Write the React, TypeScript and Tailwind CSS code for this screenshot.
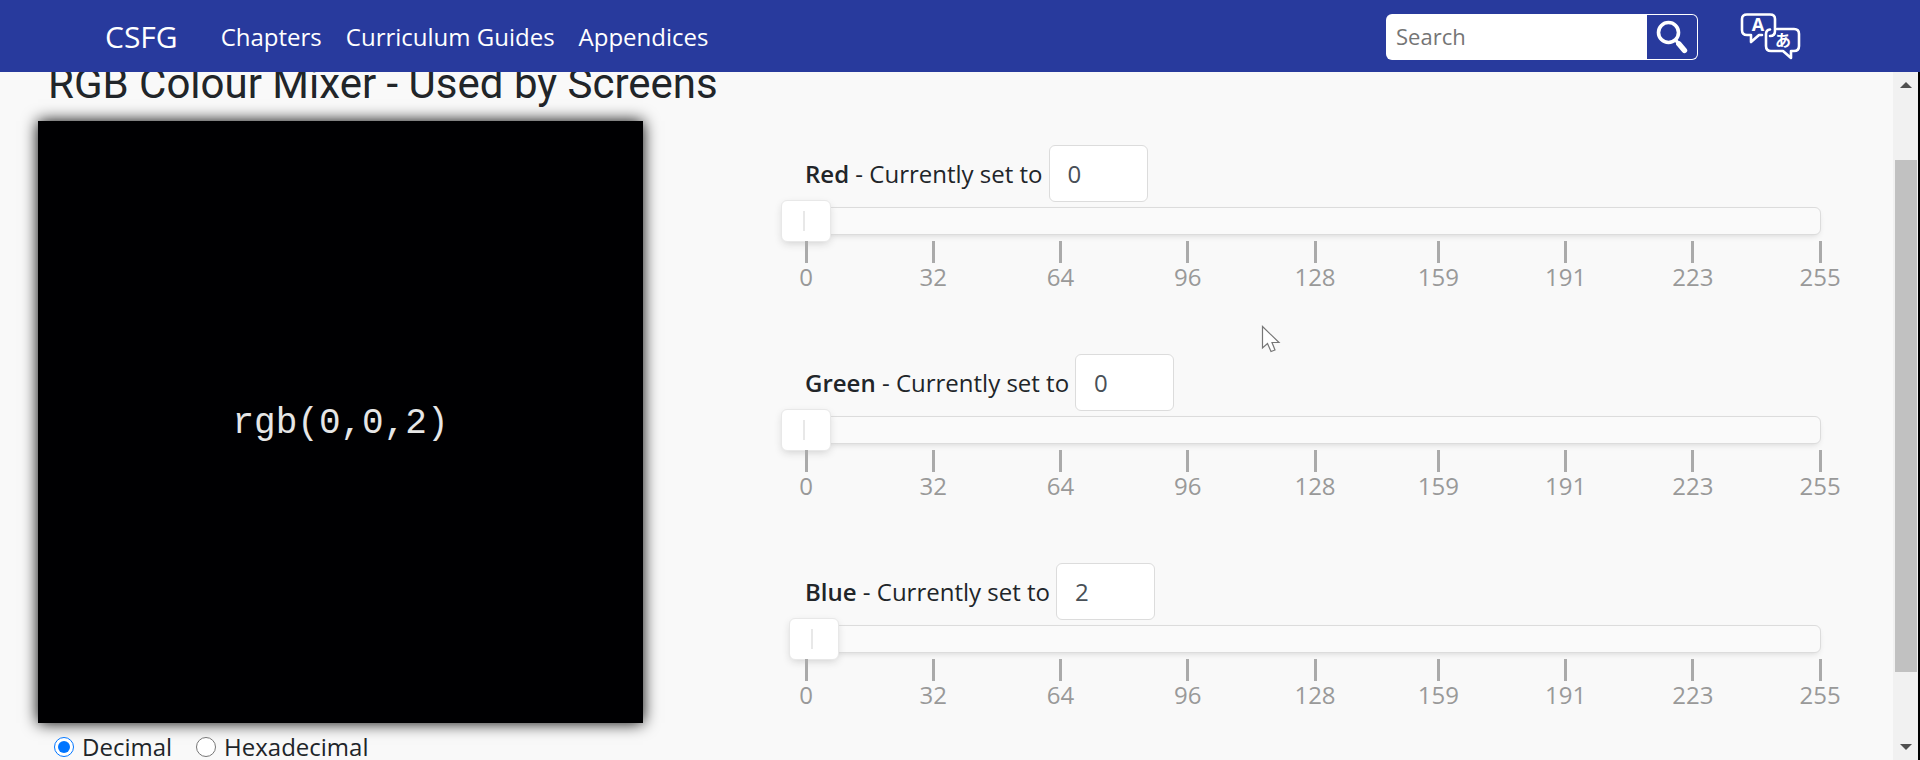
import { useState } from 'react';

type Channel = 'Red' | 'Green' | 'Blue';

const channels: Channel[] = ['Red', 'Green', 'Blue'];
const pips = [0, 32, 64, 96, 128, 159, 191, 223, 255];

function SearchIcon() {
  return (
    <svg width="32" height="34" viewBox="0 0 32 34" fill="none" stroke="currentColor" aria-hidden="true">
      <circle cx="12.5" cy="12.5" r="10" strokeWidth="3.6" />
      <path d="M19.8 20.2 L22.5 23.5" strokeWidth="3.4" />
      <path d="M22.8 23.8 L28.5 30.5" strokeWidth="5.4" strokeLinecap="round" />
    </svg>
  );
}

function LanguageIcon() {
  return (
    <svg width="62" height="48" viewBox="0 0 62 48" fill="none" stroke="currentColor" strokeWidth="2.6" strokeLinejoin="round" aria-hidden="true">
      <path d="M22 22 H19 L11 29 V22 H7 Q2 22 2 17 V6 Q2 1.5 7 1.5 H30 Q35 1.5 35 6 V18 Q35 23 30 23" strokeLinecap="round" />
      <path d="M37 16 H54 Q59 16 59 21 V33 Q59 38 54 38 H51 V45 L43 38 H31 Q26 38 26 33 V21 Q26 17 30 16.5" strokeLinecap="round" />
      <text x="18" y="18" textAnchor="middle" fill="currentColor" stroke="none" className="font-['Open_Sans',sans-serif] text-[18px] font-bold">A</text>
      <text x="43" y="33" textAnchor="middle" fill="currentColor" stroke="none" className="font-['Noto_Sans_CJK_JP',sans-serif] text-[16px] font-bold">あ</text>
    </svg>
  );
}

function Header() {
  return (
    <header className="relative z-10 flex h-18 shrink-0 items-center bg-[#283a9d] pt-0.5 pr-[118px] pl-[105px] text-white">
      <a href="#" className="mr-[43px] text-[30px]">CSFG</a>
      <nav className="flex gap-6">
        <a href="#chapters">Chapters</a>
        <a href="#guides">Curriculum Guides</a>
        <a href="#appendices">Appendices</a>
      </nav>
      <form className="ml-auto flex h-[46px]" onSubmit={(e) => e.preventDefault()}>
        <input
          type="search"
          aria-label="Search"
          placeholder="Search"
          className="w-[261px] rounded-l-md bg-white px-2.5 text-[22px] text-gray-700 outline-none placeholder:text-[#757575]"
        />
        <button type="submit" aria-label="Search" className="flex w-[51px] items-center justify-center rounded-r-md border border-l-0 border-white">
          <SearchIcon />
        </button>
      </form>
      <button type="button" aria-label="Language" className="ml-[42px]">
        <LanguageIcon />
      </button>
    </header>
  );
}

function ChannelSlider({ name, value, onChange }: { name: Channel; value: number; onChange: (value: number) => void }) {
  const set = (raw: string) => onChange(Math.max(0, Math.min(255, Number(raw) || 0)));

  return (
    <div className="h-[209px]">
      <div className="flex items-center">
        <label htmlFor={name} className="mr-1.5">
          <span className="font-semibold">{name}</span> - Currently set to
        </label>
        <input
          id={name}
          type="text"
          inputMode="numeric"
          value={value}
          onChange={(e) => set(e.target.value)}
          className="h-[57px] w-[99px] rounded-md border border-[#dcdcdc] bg-white px-[18px] text-[#495057] outline-none"
        />
      </div>
      <div className="mt-[5px] flex h-7 items-center rounded-md border border-[#dcdcdc] bg-[#fafafa] shadow-[0_3px_6px_-3px_#ccc]">
        <input
          type="range"
          min={0}
          max={255}
          value={value}
          onChange={(e) => set(e.target.value)}
          aria-label={`${name} value`}
          className="-mx-[25px] h-[42px] grow appearance-none bg-transparent outline-none [&::-webkit-slider-thumb]:h-[42px] [&::-webkit-slider-thumb]:w-[50px] [&::-webkit-slider-thumb]:appearance-none [&::-webkit-slider-thumb]:rounded-md [&::-webkit-slider-thumb]:border [&::-webkit-slider-thumb]:border-[#e8e8e8] [&::-webkit-slider-thumb]:bg-white [&::-webkit-slider-thumb]:bg-[linear-gradient(#e8e8e8,#e8e8e8)] [&::-webkit-slider-thumb]:bg-[length:2px_20px] [&::-webkit-slider-thumb]:bg-[position:45%_50%] [&::-webkit-slider-thumb]:bg-no-repeat [&::-webkit-slider-thumb]:shadow-[0_3px_8px_-2px_#ccc]"
        />
      </div>
      <div className="mt-1.5 flex px-px text-[#999]">
        {pips.map((pip, i) => (
          <div key={pip} className="basis-0" style={{ flexGrow: i < pips.length - 1 ? pips[i + 1] - pip : 0 }}>
            <div className="flex w-0 flex-col items-center">
              <span className="h-[22px] w-[3px] bg-[#aaa]" />
              <span className="leading-7">{pip}</span>
            </div>
          </div>
        ))}
      </div>
    </div>
  );
}

function ScrollRail() {
  return (
    <div className="flex w-[27px] flex-col items-center border-r-2 border-black bg-[#f1f1f1] pt-2.5 pb-2.5" aria-hidden="true">
      <svg width="12" height="6" viewBox="0 0 12 6" fill="#505050"><path d="M6 0 L12 6 H0 Z" /></svg>
      <div className="mt-18 h-[512px] w-[22px] bg-[#c1c1c1]" />
      <svg className="mt-auto" width="12" height="6" viewBox="0 0 12 6" fill="#505050"><path d="M0 0 H12 L6 6 Z" /></svg>
    </div>
  );
}

export default function App() {
  const [values, setValues] = useState<Record<Channel, number>>({ Red: 0, Green: 0, Blue: 2 });
  const [format, setFormat] = useState('Decimal');

  const rgb = channels.map((c) => values[c]);
  const label =
    format === 'Decimal' ? `rgb(${rgb.join(',')})` : `#${rgb.map((v) => v.toString(16).padStart(2, '0')).join('')}`;

  return (
    <div className="relative flex h-screen flex-col overflow-hidden bg-[#f9f9f9] font-['Open_Sans','Noto_Sans',sans-serif] text-2xl text-[#212529]">
      <Header />
      <div className="flex min-h-0 grow">
        <main className="min-w-0 grow pr-[72px] pl-[38px]">
          <h1 className="-mt-3 mb-[13px] pl-2.5 font-['Roboto',sans-serif] text-[42px] leading-12">
            RGB Colour Mixer - Used by Screens
          </h1>
          <div className="grid grid-cols-[605fr_1016fr] gap-[162px]">
            <section>
              <div
                className="flex aspect-[605/602] items-center justify-center pt-1 font-['Courier_New','Liberation_Mono',monospace] text-4xl text-[#e6e6e6] shadow-[0_0_15px_#000]"
                style={{ backgroundColor: `rgb(${rgb.join(',')})` }}
              >
                {label}
              </div>
              <div className="mt-3 flex gap-6 pl-4 leading-6">
                {['Decimal', 'Hexadecimal'].map((option) => (
                  <label key={option} className="flex items-center gap-2">
                    <input
                      type="radio"
                      name="format"
                      className="size-5"
                      checked={format === option}
                      onChange={() => setFormat(option)}
                    />
                    {option}
                  </label>
                ))}
              </div>
            </section>
            <section className="pt-6">
              {channels.map((channel) => (
                <ChannelSlider
                  key={channel}
                  name={channel}
                  value={values[channel]}
                  onChange={(value) => setValues({ ...values, [channel]: value })}
                />
              ))}
            </section>
          </div>
        </main>
        <ScrollRail />
      </div>
      <svg className="pointer-events-none absolute top-[325px] left-[1261px]" width="20" height="30" viewBox="0 0 20 30" fill="#fff" stroke="#777" strokeWidth="1.2" aria-hidden="true">
        <path d="M1.5 1.5 V23 L6.5 18.5 L10 26.5 L14 25 L11 17.5 H18 Z" />
      </svg>
    </div>
  );
}
